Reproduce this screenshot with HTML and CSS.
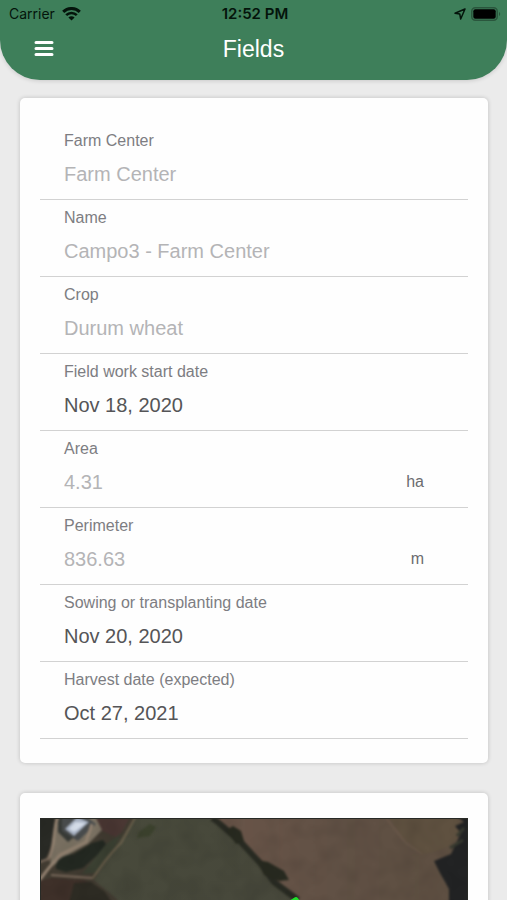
FILE: index.html
```html
<!DOCTYPE html>
<html lang="en">
<head>
<meta charset="utf-8">
<meta name="viewport" content="width=device-width, initial-scale=1">
<title>Fields</title>
<link rel="stylesheet" href="styles.css">
</head>
<body>
<div class="app">
  <header class="header">
    <div class="status">
      <div class="status-side">
        <span>Carrier</span>
        <svg class="wifi" width="19" height="14" viewBox="0 0 19 14" aria-hidden="true">
          <path d="M1.200 4.900a11.800 11.800 0 0 1 16.600 0" fill="none" stroke="#04140b" stroke-width="3"/>
          <path d="M4.200 8.200a7.500 7.500 0 0 1 10.600 0" fill="none" stroke="#04140b" stroke-width="2.600"/>
          <path d="M9.500 13.600 6.400 10.500a4.400 4.400 0 0 1 6.200 0z" fill="#04140b"/>
        </svg>
      </div>
      <span class="clock">12:52 PM</span>
      <div class="status-side status-end">
        <svg width="12" height="12" viewBox="0 0 12 12" aria-hidden="true">
          <path d="M11 1 1 5.200l4.800.9.900 4.900z" fill="none" stroke="#04140b" stroke-width="1.500" stroke-linejoin="round"/>
        </svg>
        <svg width="30" height="14" viewBox="0 0 30 14" aria-hidden="true">
          <rect x=".8" y=".8" width="25.400" height="12.400" rx="3.500" fill="none" stroke="#2a563d" stroke-width="1.500"/>
          <rect x="2.300" y="2.300" width="22.400" height="9.400" rx="2" fill="#000"/>
          <path d="M28 5c1.600.5 1.600 3.500 0 4z" fill="#2a563d"/>
        </svg>
      </div>
    </div>
    <div class="bar">
      <button class="menu" type="button" aria-label="Menu">
        <svg width="20" height="16" viewBox="0 0 20 16" aria-hidden="true">
          <path d="M2 1.500h16M2 7.500h16M2 13.500h16" stroke="#fff" stroke-width="3" stroke-linecap="round"/>
        </svg>
      </button>
      <h1 class="title">Fields</h1>
    </div>
  </header>
  <main class="content">
    <form class="card form">
      <div class="field">
        <label for="farm">Farm Center</label>
        <input id="farm" type="text" value="Farm Center" disabled>
      </div>
      <div class="field">
        <label for="name">Name</label>
        <input id="name" type="text" value="Campo3 - Farm Center" disabled>
      </div>
      <div class="field">
        <label for="crop">Crop</label>
        <input id="crop" type="text" value="Durum wheat" disabled>
      </div>
      <div class="field">
        <label for="start">Field work start date</label>
        <input id="start" type="text" value="Nov 18, 2020">
      </div>
      <div class="field">
        <label for="area">Area</label>
        <div class="measure"><input id="area" type="text" value="4.31" disabled><span>ha</span></div>
      </div>
      <div class="field">
        <label for="perimeter">Perimeter</label>
        <div class="measure"><input id="perimeter" type="text" value="836.63" disabled><span>m</span></div>
      </div>
      <div class="field">
        <label for="sowing">Sowing or transplanting date</label>
        <input id="sowing" type="text" value="Nov 20, 2020">
      </div>
      <div class="field">
        <label for="harvest">Harvest date (expected)</label>
        <input id="harvest" type="text" value="Oct 27, 2021">
      </div>
    </form>
    <section class="card map-card" aria-label="Field map">
      <svg class="map" viewBox="0 0 428 240" role="img" aria-label="Satellite view of the field">
        <defs>
          <linearGradient id="soil" x1="0" y1="0" x2="1" y2="0">
            <stop offset="0" stop-color="#6a5549"/><stop offset=".5" stop-color="#615145"/><stop offset="1" stop-color="#5d4f41"/>
          </linearGradient>
          <linearGradient id="grass" x1="0" y1="0" x2="1" y2="1">
            <stop offset="0" stop-color="#484a3b"/><stop offset="1" stop-color="#46453b"/>
          </linearGradient>
          <filter id="soft" x="-5%" y="-5%" width="110%" height="110%" color-interpolation-filters="sRGB"><feGaussianBlur stdDeviation="1"/></filter>
          <filter id="grain" x="0" y="0" width="100%" height="100%">
            <feTurbulence type="fractalNoise" baseFrequency=".05" numOctaves="2" seed="4"/>
            <feColorMatrix values="0 0 0 0 0  0 0 0 0 0  0 0 0 0 0  1.500 0 0 0 -.55"/>
          </filter>
        </defs>
        <rect width="428" height="240" fill="url(#grass)"/>
        <g filter="url(#soft)">
          <path d="M165-4H432V244H330L258 84 228 58 204 28z" fill="url(#soil)"/>
          <path d="M-4-4H98L84 16 72 34 54 62 78 82V244H-4z" fill="#413b31"/>
          <path d="M54-4H92L78 20 60 12z" fill="#4a3733"/>
          <path d="M20-4H54L62 12 48 26 26 38 10 50 12 26z" fill="#7a7162"/>
          <path d="M-4-4H15L13 24 4 44-4 40z" fill="#292a25"/>
          <path d="M18-2 30-3 26 9 34 19 28 24 18 14z" fill="#383b37"/>
          <path d="M22-2 44-3 56 6 38 23 22 13z" fill="#484b4c"/>
          <path d="M25 11 37-1 49 4 34 18z" fill="#a9b3c4"/>
          <path d="M29 11 35 4 46 5 34 14z" fill="#d4dce8"/>
          <path d="M18-2C12 15 16 28 8 42M52 6 46 24 20 37 8 51-2 64" fill="none" stroke="#91806f" stroke-width="3"/>
          <path d="M0 44 10 40M11 57 52 60" fill="none" stroke="#79685a" stroke-width="2"/>
          <path d="M16 51C15 41 24 37 34 36L52 25 63 22 68 29 54 40 43 50 26 54z" fill="#232821"/>
          <path d="M66 26 82 15 72 35 55 55 42 56z" fill="#3b4032"/>
          <path d="M52 61C63 46 68 37 81 25L96-2" fill="none" stroke="#6b604c" stroke-width="2"/>
          <path d="M-2 63 12 60 44 62 60 70 72 84H-2z" fill="#3e3029"/>
          <path d="M34 65 51 64 65 74 72 85H29z" fill="#2d2b23"/>
          <path d="M99 14 110 6 116 9 110 18 97 20z" fill="#3b412d"/>
          <path d="M172 0C183 7 191 17 199 22L221 46 234 64 258 82" fill="none" stroke="#292b23" stroke-width="6"/>
          <path d="M186 12 193 8 201 13 204 23 196 26zM217 42 228 44 244 53 249 62 239 63 224 57z" fill="#282a20"/>
          <path d="M346 0 366 25 383 36" fill="none" stroke="#74604f" stroke-width="2" opacity=".5"/>
          <path d="M383 36C398 33 409 31 417 20L424 10 412-4H347L364 21z" fill="#5f5140"/>
          <path d="M394 43 411 36 421 15 415 8 424 4 414-4H432V244H410L409 71 400 55z" fill="#222324"/>
          <path d="M417 18 424 10M410 30 423 22" stroke="#373a30" stroke-width="3"/>
        </g>
        <rect width="428" height="240" filter="url(#grain)" opacity=".1"/>
        <path d="M256 81 285 120 245 220 80 190 60 150 238 92z" fill="#ff0000" fill-opacity=".18" stroke="#20e02c" stroke-width="4" stroke-linejoin="round"/>
        <path d="M0 .5H428M.5 0V240M427.500 0V240" stroke="#282a26"/>
      </svg>
    </section>
  </main>
</div>
</body>
</html>
```
FILE: styles.css
```css
* {
  box-sizing: border-box;
}

body {
  margin: 0;
  background: #ebebeb;
  color: #58585a;
  font-family: "Liberation Sans", Arial, sans-serif;
}

.app {
  display: flex;
  flex-direction: column;
  height: 100vh;
  overflow: hidden;
}

.header {
  flex: none;
  padding-bottom: 12px;
  border-radius: 0 0 40px 40px;
  background: #3e7f5a;
  box-shadow: 0 1px 4px #00000024;
}

.status {
  display: grid;
  grid-template-columns: 1fr auto 1fr;
  align-items: center;
  height: 28px;
  padding: 0 6px 0 9px;
  color: #04140b;
  font: 14px/28px Inter, sans-serif;
}

.status-side {
  display: flex;
  align-items: center;
  gap: 7px;
}

.status-end {
  justify-content: flex-end;
  gap: 5px;
}

.clock {
  font-size: 15px;
  font-weight: 600;
}

.bar {
  display: grid;
  grid-template-columns: 40px 1fr 40px;
  align-items: center;
  height: 40px;
  padding: 0 24px;
}

.menu {
  display: flex;
  align-items: center;
  justify-content: center;
  width: 40px;
  height: 40px;
  padding: 0;
  border: 0;
  background: none;
}

.title {
  margin: 0;
  color: #fff;
  font-size: 23px;
  font-weight: 400;
  line-height: 42px;
  text-align: center;
}

.content {
  flex: 1;
  min-height: 0;
  padding: 18px 19px 18px 20px;
  overflow: hidden;
}

.card {
  border-radius: 5px;
  background: #fefefe;
  box-shadow: 0 0 4px #00000030;
}

.form {
  padding: 25px 20px 24px;
}

.field {
  display: flex;
  flex-direction: column;
  height: 77px;
  padding: 8px 24px 0;
  border-bottom: 1px solid #d2d2d2;
}

.field label {
  color: #7d7d82;
  font-size: 16px;
  line-height: 20px;
}

.field input {
  width: 100%;
  min-width: 0;
  height: 46px;
  padding: 0;
  border: 0;
  background: none;
  color: #555557;
  font: 20px/24px "Liberation Sans", Arial, sans-serif;
}

.field input:disabled {
  color: #b4b4b6;
}

.measure {
  display: flex;
  align-items: center;
  padding-right: 20px;
}

.measure span {
  color: #6c6c70;
  font-size: 16px;
}

.map-card {
  margin-top: 30px;
  padding: 25px 20px;
}

.map {
  display: block;
  width: 100%;
}
```
